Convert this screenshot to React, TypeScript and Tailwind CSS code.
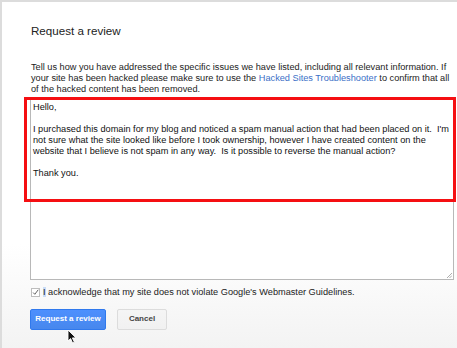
import React from "react";

const FONT = { fontFamily: '"Liberation Sans", Arial, Helvetica, sans-serif' };

function Cursor() {
  return (
    <svg className="absolute left-[67px] top-[329px]" width="10" height="15" viewBox="0 0 10 15">
      <path d="M1 1 L1 12 L3.6 9.6 L5.6 14 L7.4 13.2 L5.4 8.9 L9 8.9 Z" fill="#111" stroke="#fff" strokeWidth="0.9" />
    </svg>
  );
}

export default function App() {
  return (
    <div className="relative w-[457px] h-[348px] overflow-hidden bg-white" style={FONT}>
      <div className="h-[348px] border-t-2 border-l-2 border-[#dcdcdc] bg-gradient-to-b from-white from-70% to-[#f3f3f3]">
        <div className="pl-[28px] pt-[22px]">
          <h1 className="pl-[1px] text-[11.6px] text-[#222] leading-[14px]">Request a review</h1>

          <p className="mt-[24px] whitespace-nowrap pl-[1px] text-[9.2px] leading-[11px] text-[#222]">
            Tell us how you have addressed the specific issues we have listed, including all relevant information. If
            <br />
            your site has been hacked please make sure to use the{" "}
            <span className="text-[#3b6fc7]">Hacked Sites Troubleshooter</span> to confirm that all
            <br />
            of the hacked content has been removed.
          </p>

          <div className="relative mt-[3px] h-[182px] w-[424px] border border-[#b8b8b8] bg-white">
            <div className="whitespace-pre px-[2px] pt-[3px] text-[9.2px] leading-[11px] text-[#111]">
              {"Hello,\n\nI purchased this domain for my blog and noticed a spam manual action that had been placed on it.  I'm\nnot sure what the site looked like before I took ownership, however I have created content on the\nwebsite that I believe is not spam in any way.  Is it possible to reverse the manual action?\n\nThank you."}
            </div>
            <svg className="absolute right-[1px] bottom-[1px]" width="6" height="6" viewBox="0 0 6 6">
              <path d="M1 6 L6 1 M3.5 6 L6 3.5" stroke="#999" strokeWidth="0.8" />
            </svg>
            <div className="absolute -left-[7px] -top-[2px] h-[105px] w-[432px] border-[3px] border-[#f50f12]" />
          </div>

          <label className="mt-[6px] flex items-center gap-[3px] pl-[1px] text-[9.2px] text-[#222]">
            <span className="flex h-[9px] w-[9px] items-center justify-center border border-[#bdbdbd] bg-white">
              <svg width="9" height="9" viewBox="0 0 9 9">
                <path d="M1.5 4.6 L3.6 6.8 L8 1" fill="none" stroke="#555" strokeWidth="1.2" />
              </svg>
            </span>
            <span>
              <span className="bg-[#c9dcf6]">I</span> acknowledge that my site does not violate Google's Webmaster Guidelines.
            </span>
          </label>

          <div className="mt-[9px] flex gap-[11px]">
            <button className="h-[21px] w-[76px] rounded-[2px] border border-[#3079ed] bg-gradient-to-b from-[#4d90fe] to-[#4787ed] text-[8px] font-bold text-white">
              Request a review
            </button>
            <button className="h-[21px] w-[50px] rounded-[2px] border border-[#dcdcdc] bg-gradient-to-b from-[#f5f5f5] to-[#f1f1f1] text-[8px] font-bold text-[#444]">
              Cancel
            </button>
          </div>
        </div>
      </div>
      <Cursor />
    </div>
  );
}
